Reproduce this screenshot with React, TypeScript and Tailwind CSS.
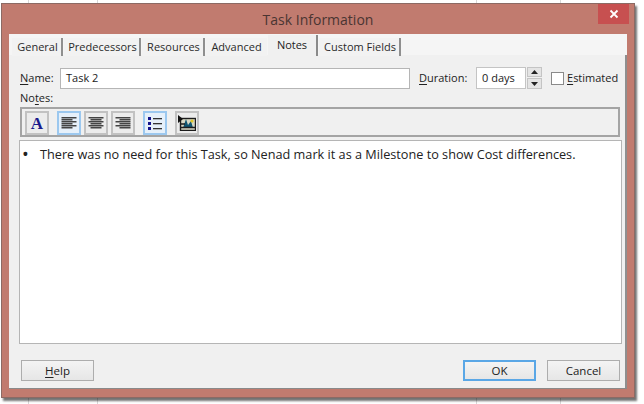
const font = { fontFamily: '"Open Sans", "Noto Sans", sans-serif' };

function U({ children }: { children: string }) {
  return <span className="underline underline-offset-2">{children}</span>;
}

function Tab({ label, active, sep = true, w }: { label: string; active?: boolean; sep?: boolean; w: string }) {
  return active ? (
    <div className={`${w} h-[21px] -mt-[2px] flex items-center justify-center bg-[#f0f0f0] border-r-2 border-[#8a8a8a] text-[11px] text-[#222] font-medium`}>
      {label}
    </div>
  ) : (
    <div className={`${w} h-[18px] mt-[1px] pl-[2px] flex items-center justify-center bg-[#f2f2f2] border-r-2 ${sep ? "border-[#8f8f8f]" : "border-transparent"} text-[11px] text-[#2a2a2a]`}>
      {label}
    </div>
  );
}

function Tool({ active, children, className = "" }: { active?: boolean; children: React.ReactNode; className?: string }) {
  return (
    <div className={`w-[24px] h-[24px] flex items-center justify-center border-2 ${active ? "border-[#9cc8ef] bg-[#e6f0fa]" : "border-[#c2c2c2] bg-[#ececec]"} ${className}`}>
      {children}
    </div>
  );
}

function Lines({ kind }: { kind: "l" | "c" | "r" }) {
  const widths = [15, 11, 15, 11, 15, 11];
  return (
    <svg width="16" height="14" viewBox="0 0 16 14">
      {widths.map((w, i) => {
        const x = kind === "l" ? 0.5 : kind === "r" ? 15.5 - w : 8 - w / 2;
        return <rect key={i} x={x} y={1 + i * 2} width={w} height={1.5} fill="#444444" />;
      })}
    </svg>
  );
}

function Btn({ label, w, primary, ml = "" }: { label: React.ReactNode; w: string; primary?: boolean; ml?: string }) {
  return (
    <div className={`${w} ${ml} h-[21px] flex items-center justify-center text-[11.5px] text-[#222] bg-gradient-to-b from-[#f4f4f4] to-[#e6e6e6] ${primary ? "border-2 border-[#5aa7e6]" : "border border-[#adadad]"}`}>
      {label}
    </div>
  );
}

export default function App() {
  return (
    <div className="relative w-[644px] h-[404px] bg-white overflow-hidden pt-[3px] pl-[1px]" style={font}>
      <div className="absolute top-0 left-[28px] w-px h-full bg-[#d8d8d8]" />
      <div className="absolute top-0 left-[97px] w-px h-full bg-[#d8d8d8]" />
      <div className="absolute top-0 left-[476px] w-px h-full bg-[#d8d8d8]" />
      <div className="absolute top-0 left-[560px] w-px h-full bg-[#d8d8d8]" />
      <div className="relative w-[634px] h-[395px] bg-[#c17b6f] border border-[#8c6a64] shadow-[2px_3px_2px_rgba(0,0,0,0.55)] flex flex-col px-[7px] pb-[8px]">
        <div className="h-[30px] shrink-0 flex items-center justify-center text-[14px] text-[#4a3532]">Task Information</div>
        <div className="absolute right-[5px] top-0 w-[31px] h-[20px] bg-[#c75050] flex items-center justify-center">
          <svg width="10" height="10" viewBox="0 0 10 10"><path d="M1.5 1.5 L8.5 8.5 M8.5 1.5 L1.5 8.5" stroke="#fff" strokeWidth="1.8" /></svg>
        </div>

        <div className="flex-1 flex flex-col bg-[#f0f0f0] border-t border-b border-t-[#f5f5f5] border-b-[#8a8a8a]">
          <div className="h-[20px] shrink-0 pt-[2px] pl-[3px] flex items-start gap-[1px] bg-[#f5f5f5]">
            <Tab label="General" w="w-[51px]" />
            <Tab label="Predecessors" w="w-[77px]" />
            <Tab label="Resources" w="w-[63px]" />
            <Tab label="Advanced" sep={false} w="w-[61px]" />
            <Tab label="Notes" active w="w-[50px]" />
            <Tab label="Custom Fields" w="w-[82px]" />
          </div>
          <div className="flex-1 flex flex-col border-r-2 border-[#8f8f8f] pl-[11px] pr-[3px] pt-[12px]">
            <div className="flex items-center h-[22px] text-[11px] text-[#222]">
              <div className="w-[40px]"><U>N</U>ame:</div>
              <div className="w-[350px] h-[21px] bg-white border border-[#b5b5b5] pl-[5px] flex items-center text-[11px]">Task 2</div>
              <div className="ml-[9px] w-[57px]"><U>D</U>uration:</div>
              <div className="w-[50px] h-[22px] bg-white border border-[#c4c4c4] pl-[5px] flex items-center">0 days</div>
              <div className="ml-[1px] w-[15px] h-[22px] flex flex-col gap-[1px]">
                <div className="h-[10px] bg-[#e4e4e4] border border-[#c4c4c4] flex items-center justify-center">
                  <svg width="7" height="4" viewBox="0 0 7 4"><path d="M3.5 0 L7 4 H0 Z" fill="#222" /></svg>
                </div>
                <div className="h-[11px] bg-[#e4e4e4] border border-[#c4c4c4] flex items-center justify-center">
                  <svg width="7" height="4" viewBox="0 0 7 4"><path d="M0 0 H7 L3.5 4 Z" fill="#222" /></svg>
                </div>
              </div>
              <div className="ml-[9px] w-[13px] h-[13px] bg-white border border-[#8a8a8a]" />
              <div className="ml-[3px]"><U>E</U>stimated</div>
            </div>
            <div className="h-[18px] text-[11px] text-[#222] flex items-center">No<U>t</U>es:</div>
            <div className="h-[30px] w-[600px] border-2 border-[#a4a4a4] bg-[#f0f0f0] flex items-center pl-[3px] pt-[2px] box-border">
              <Tool>
                <span className="text-[#1a1a8c] text-[17px] font-bold leading-none" style={{ fontFamily: '"Liberation Serif", serif' }}>A</span>
              </Tool>
              <Tool active className="ml-[8px]"><Lines kind="l" /></Tool>
              <Tool className="ml-[3px]"><Lines kind="c" /></Tool>
              <Tool className="ml-[3px]"><Lines kind="r" /></Tool>
              <Tool active className="ml-[8px]">
                <svg width="16" height="15" viewBox="0 0 16 15">
                  <rect x="1" y="1" width="3" height="3" fill="#14148c" /><rect x="1" y="6" width="3" height="3" fill="#14148c" /><rect x="1" y="11" width="3" height="3" fill="#14148c" />
                  <rect x="6" y="2" width="9" height="1.3" fill="#333" /><rect x="6" y="7" width="9" height="1.3" fill="#333" /><rect x="6" y="12" width="9" height="1.3" fill="#333" />
                </svg>
              </Tool>
              <Tool className="ml-[8px]">
                <svg width="18" height="16" viewBox="0 0 18 16">
                  <rect x="2.5" y="3.5" width="15" height="12" fill="#d9d9c4" stroke="#1c1c1c" strokeWidth="1.4" />
                  <path d="M0 0 L5 4 L0 8 Z" fill="#111" />
                  <path d="M5 13 L8 4 L10 10 L13 6 L15 13 Z" fill="#0f5570" />
                  <circle cx="14" cy="6" r="1.6" fill="#e0c828" />
                  <path d="M3 12.5 H17 M3 9 H7" stroke="#1c1c1c" strokeWidth="1.3" />
                </svg>
              </Tool>
            </div>
            <div className="mt-[3px] -ml-[1px] h-[204px] w-[603px] bg-white border border-[#b5b5b5] pl-[2px] pt-[4px] text-[12.7px] text-[#222] leading-[18px]">
              <div className="flex">
                <span className="w-[18px] text-[18px] leading-[18px]">•</span>
                <span>There was no need for this Task, so Nenad mark it as a Milestone to show Cost differences.</span>
              </div>
            </div>
            <div className="flex mt-[16px] ml-[1px] w-[599px]">
              <Btn label={<span><U>H</U>elp</span>} w="w-[73px]" />
              <div className="flex-1" />
              <Btn label="OK" w="w-[73px]" primary />
              <Btn label="Cancel" w="w-[73px]" ml="ml-[11px]" />
            </div>
          </div>
        </div>
      </div>
    </div>
  );
}
